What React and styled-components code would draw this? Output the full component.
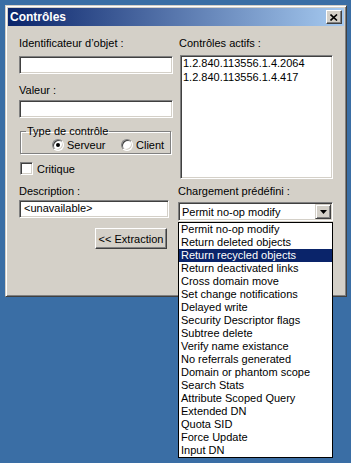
import styled, { createGlobalStyle } from 'styled-components'

const GlobalStyle = createGlobalStyle`
  html, body {
    margin: 0;
    padding: 0;
    background: #3a6ea5;
  }
  body {
    font-family: "Liberation Sans", Arial, sans-serif;
    font-size: 11px;
    color: #000;
  }
`

const Desktop = styled.div`
  width: 351px;
  height: 463px;
  padding: 5px 0 0 5px;
  box-sizing: border-box;
  overflow: hidden;
`

const Window = styled.div`
  width: 342px;
  height: 292px;
  box-sizing: border-box;
  padding: 2px;
  display: flex;
  flex-direction: column;
  background: #d4d0c8;
  border: 1px solid;
  border-color: #d4d0c8 #404040 #404040 #d4d0c8;
  box-shadow: inset 1px 1px #fff, inset -1px -1px #808080;
`

const TitleBar = styled.div`
  height: 18px;
  display: flex;
  align-items: center;
  justify-content: space-between;
  padding: 0 2px;
  background: linear-gradient(to right, #0a246a, #a6caf0);
`

const Title = styled.span`
  color: #fff;
  font-weight: bold;
  font-size: 12px;
`

const CloseButton = styled.div`
  width: 16px;
  height: 14px;
  box-sizing: border-box;
  display: flex;
  align-items: center;
  justify-content: center;
  background: #d4d0c8;
  border: 1px solid;
  border-color: #fff #404040 #404040 #fff;
  box-shadow: inset -1px -1px #808080;
`

const Body = styled.div`
  display: grid;
  grid-template-columns: 154px 155px;
  column-gap: 5px;
  padding: 11px 0 0 11px;
`

const Column = styled.div`
  display: flex;
  flex-direction: column;
  align-items: flex-start;
`

const Label = styled.div`
  height: 13px;
  line-height: 13px;
  margin-top: ${(p) => p.$mt || 0}px;
  margin-left: ${(p) => p.$ml || 0}px;
  white-space: nowrap;
`

const TextBox = styled.div`
  width: ${(p) => p.$w || 154}px;
  height: 18px;
  box-sizing: border-box;
  margin-top: ${(p) => p.$mt || 0}px;
  padding: 0 4px;
  line-height: 14px;
  background: #fff;
  border: 1px solid;
  border-color: #808080 #fff #fff #808080;
  box-shadow: inset 1px 1px #404040, inset -1px -1px #d4d0c8;
  white-space: nowrap;
`

const GroupBox = styled.fieldset`
  width: 151px;
  box-sizing: border-box;
  margin: 7px 0 0 1px;
  padding: 0 0 2px 5px;
  border: 1px solid #808080;
  box-shadow: 1px 1px 0 #fff, inset 1px 1px 0 #fff;
  border-radius: 0;

  & > legend {
    padding: 0 1px;
    height: 13px;
    line-height: 13px;
  }
`

const RadioRow = styled.div`
  display: flex;
  align-items: center;
  height: 13px;
  padding-left: 26px;
`

const RadioItem = styled.label`
  display: flex;
  align-items: center;
  gap: 3px;
  width: ${(p) => (p.$w ? `${p.$w}px` : 'auto')};
`

const RadioDot = styled.span`
  position: relative;
  flex: none;
  width: 12px;
  height: 12px;
  box-sizing: border-box;
  border-radius: 50%;
  background: #fff;
  border: 1px solid;
  border-color: #808080 #fff #fff #808080;
  box-shadow: inset 1px 1px #404040, inset -1px -1px #d4d0c8;

  &::after {
    content: '';
    display: ${(p) => (p.$checked ? 'block' : 'none')};
    position: absolute;
    left: 3px;
    top: 3px;
    width: 4px;
    height: 4px;
    border-radius: 50%;
    background: #000;
  }
`

const CheckRow = styled.label`
  display: flex;
  align-items: center;
  gap: 4px;
  margin: 8px 0 0 1px;
  height: 13px;
`

const CheckBox = styled.span`
  width: 13px;
  height: 13px;
  box-sizing: border-box;
  background: #fff;
  border: 1px solid;
  border-color: #808080 #fff #fff #808080;
  box-shadow: inset 1px 1px #404040, inset -1px -1px #d4d0c8;
`

const Button = styled.div`
  align-self: flex-end;
  width: 72px;
  height: 21px;
  box-sizing: border-box;
  margin: 10px 6px 0 0;
  display: flex;
  align-items: center;
  justify-content: center;
  background: #d4d0c8;
  border: 1px solid;
  border-color: #fff #404040 #404040 #fff;
  box-shadow: inset -1px -1px #808080;
  white-space: nowrap;
`

const ListBox = styled.div`
  width: 153px;
  height: 124px;
  box-sizing: border-box;
  margin: 5px 0 0 2px;
  padding: 0 1px;
  background: #fff;
  border: 1px solid;
  border-color: #808080 #fff #fff #808080;
  box-shadow: inset 1px 1px #404040, inset -1px -1px #d4d0c8;
`

const ListLine = styled.div`
  height: 14px;
  line-height: 14px;
  padding-left: 1px;
`

const ComboWrap = styled.div`
  position: relative;
  width: 155px;
  margin-top: 4px;
`

const Combo = styled.div`
  height: 19px;
  box-sizing: border-box;
  display: flex;
  align-items: center;
  justify-content: space-between;
  padding: 1px 1px 1px 3px;
  background: #fff;
  border: 1px solid;
  border-color: #808080 #fff #fff #808080;
  box-shadow: inset 1px 1px #404040, inset -1px -1px #d4d0c8;
`

const ArrowButton = styled.div`
  width: 16px;
  height: 15px;
  box-sizing: border-box;
  display: flex;
  align-items: center;
  justify-content: center;
  background: #d4d0c8;
  border: 1px solid;
  border-color: #d4d0c8 #404040 #404040 #d4d0c8;
  box-shadow: inset 1px 1px #fff, inset -1px -1px #808080;
`

const DropList = styled.div`
  position: absolute;
  top: 20px;
  left: 0;
  width: 155px;
  box-sizing: border-box;
  background: #fff;
  border: 1px solid #000;
  z-index: 2;
`

const DropItem = styled.div`
  height: 13px;
  line-height: 13px;
  padding-left: 2px;
  white-space: nowrap;
  background: ${(p) => (p.$selected ? '#0a246a' : 'transparent')};
  color: ${(p) => (p.$selected ? '#fff' : '#000')};
`

const presets = [
  'Permit no-op modify',
  'Return deleted objects',
  'Return recycled objects',
  'Return deactivated links',
  'Cross domain move',
  'Set change notifications',
  'Delayed write',
  'Security Descriptor flags',
  'Subtree delete',
  'Verify name existance',
  'No referrals generated',
  'Domain or phantom scope',
  'Search Stats',
  'Attribute Scoped Query',
  'Extended DN',
  'Quota SID',
  'Force Update',
  'Input DN',
]

const activeControls = ['1.2.840.113556.1.4.2064', '1.2.840.113556.1.4.417']

export default function App() {
  return (
    <Desktop>
      <GlobalStyle />
      <Window>
        <TitleBar>
          <Title>Contrôles</Title>
          <CloseButton>
            <svg width="8" height="7" viewBox="0 0 8 7">
              <path d="M0.5 0.5L7 6.5M7 0.5L0.5 6.5" stroke="#000" strokeWidth="1.6" />
            </svg>
          </CloseButton>
        </TitleBar>
        <Body>
          <Column>
            <Label>Identificateur d’objet :</Label>
            <TextBox $mt={6} />
            <Label $mt={10}>Valeur :</Label>
            <TextBox $mt={3} />
            <GroupBox>
              <legend>Type de contrôle</legend>
              <RadioRow>
                <RadioItem $w={69}>
                  <RadioDot $checked />
                  Serveur
                </RadioItem>
                <RadioItem>
                  <RadioDot />
                  Client
                </RadioItem>
              </RadioRow>
            </GroupBox>
            <CheckRow>
              <CheckBox />
              Critique
            </CheckRow>
            <Label $mt={10}>Description :</Label>
            <TextBox $mt={2} $w={150}>
              &lt;unavailable&gt;
            </TextBox>
            <Button>&lt;&lt; Extraction</Button>
          </Column>
          <Column>
            <Label $ml={1}>Contrôles actifs :</Label>
            <ListBox>
              {activeControls.map((item) => (
                <ListLine key={item}>{item}</ListLine>
              ))}
            </ListBox>
            <Label $mt={6}>Chargement prédéfini :</Label>
            <ComboWrap>
              <Combo>
                <span>Permit no-op modify</span>
                <ArrowButton>
                  <svg width="7" height="4" viewBox="0 0 7 4">
                    <path d="M0 0H7L3.5 4Z" fill="#000" />
                  </svg>
                </ArrowButton>
              </Combo>
              <DropList>
                {presets.map((item, i) => (
                  <DropItem key={item} $selected={i === 2}>
                    {item}
                  </DropItem>
                ))}
              </DropList>
            </ComboWrap>
          </Column>
        </Body>
      </Window>
    </Desktop>
  )
}
